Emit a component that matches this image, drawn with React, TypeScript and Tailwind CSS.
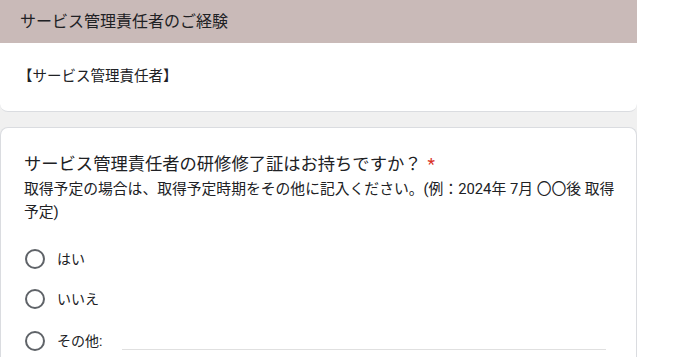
import React from "react";

const font = { fontFamily: 'Roboto, "Noto Sans CJK JP", sans-serif' };

function Radio({ label, other }: { label: string; other?: boolean }) {
  return (
    <div className="flex h-[40px] items-center">
      <span className="ml-[24px] h-[20px] w-[20px] shrink-0 rounded-full border-2 border-[#5f6368]" />
      <span className="ml-[12px] text-[14px] text-[#202124]">{label}</span>
      {other && (
        <span className="ml-[20px] mt-[16px] h-px w-[484px] bg-[#e0e0e0]" />
      )}
    </div>
  );
}

export default function App() {
  return (
    <div className="h-[357px] w-[683px] overflow-hidden bg-white" style={font}>
      <div className="w-[637px] bg-[#f0f0f0]">
        <div className="flex h-[43px] items-center bg-[#c9bab8] px-[20px] text-[16px] text-[#202124]">
          サービス管理責任者のご経験
        </div>
        <div className="flex h-[69px] items-center rounded-b-[8px] border-b border-[#dadce0] bg-white px-[18px] text-[14.5px] text-[#202124]">
          【サービス管理責任者】
        </div>
        <div className="mt-[15px] h-[240px] rounded-t-[8px] border border-b-0 border-[#dadce0] bg-white pt-[23px]">
          <div className="px-[23px] text-[17.3px] leading-[26px] text-[#202124]">
            サービス管理責任者の研修修了証はお持ちですか？
            <span className="ml-[6px] text-[#d93025]">*</span>
          </div>
          <div className="mt-[1px] pl-[23px] pr-[12px] text-[14.8px] leading-[23px] text-[#202124]">
            取得予定の場合は、取得予定時期をその他に記入ください。(例：2024年 7月 〇〇後 取得予定)
          </div>
          <div className="mt-[15px]">
            <Radio label="はい" />
            <Radio label="いいえ" />
            <div className="h-[2px]" />
            <Radio label="その他:" other />
          </div>
        </div>
      </div>
    </div>
  );
}
